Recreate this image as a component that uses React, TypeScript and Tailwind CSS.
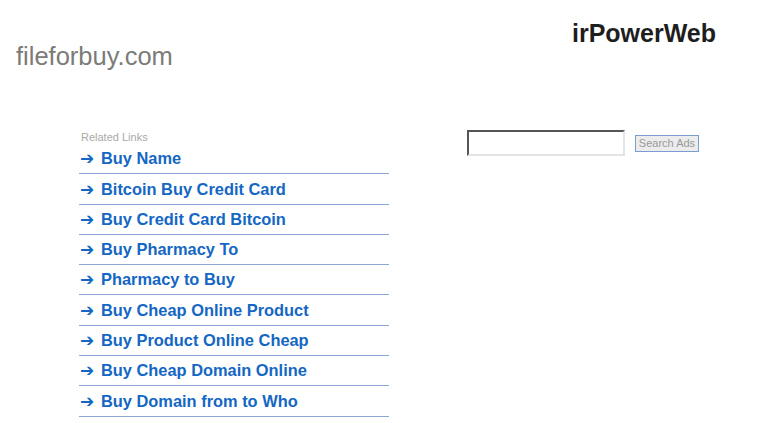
const links = [
  'Buy Name',
  'Bitcoin Buy Credit Card',
  'Buy Credit Card Bitcoin',
  'Buy Pharmacy To',
  'Pharmacy to Buy',
  'Buy Cheap Online Product',
  'Buy Product Online Cheap',
  'Buy Cheap Domain Online',
  'Buy Domain from to Who',
];

export default function App() {
  return (
    <div className="w-[777px] h-[423px] overflow-hidden bg-white font-['Liberation_Sans',Arial,sans-serif]">
      {/* Header */}
      <div className="flex items-start justify-between">
        <div className="pl-[16px] pt-[41px] text-[25.5px] leading-[30px] text-[#7b7b78]">fileforbuy.com</div>
        <div className="pr-[61px] pt-[18px] text-[25px] leading-[30px] font-bold text-[#1e1e1e]">irPowerWeb</div>
      </div>

      {/* Content */}
      <div className="flex mt-[59px]">
        <div className="ml-[79px] w-[310px]">
          <div className="pl-[2px] text-[11px] leading-[14px] text-[#a9a9a9]">Related Links</div>
          <ul>
            {links.map((link) => (
              <li
                key={link}
                className="h-[30.3px] border-b-[1.5px] border-[#8ea6d6] flex items-end pb-[5px] pl-[1px] text-[16.4px] font-bold text-[#1467c3] leading-[20px]"
              >
                <span className="w-[21px] text-[17px] font-['DejaVu_Sans',sans-serif]">➔</span>
                <span>{link}</span>
              </li>
            ))}
          </ul>
        </div>

        <div className="ml-[78px] flex items-start gap-[10px]">
          <input
            type="text"
            className="w-[158px] h-[26px] bg-white border-2 border-t-[#555] border-l-[#555] border-r-[#e3e3e3] border-b-[#e3e3e3] outline-none"
          />
          <button className="mt-[5px] w-[64px] h-[17px] bg-[#ececec] border border-[#7b9dd3] text-[11px] leading-[15px] text-[#9a9a9a]">
            Search Ads
          </button>
        </div>
      </div>
    </div>
  );
}
